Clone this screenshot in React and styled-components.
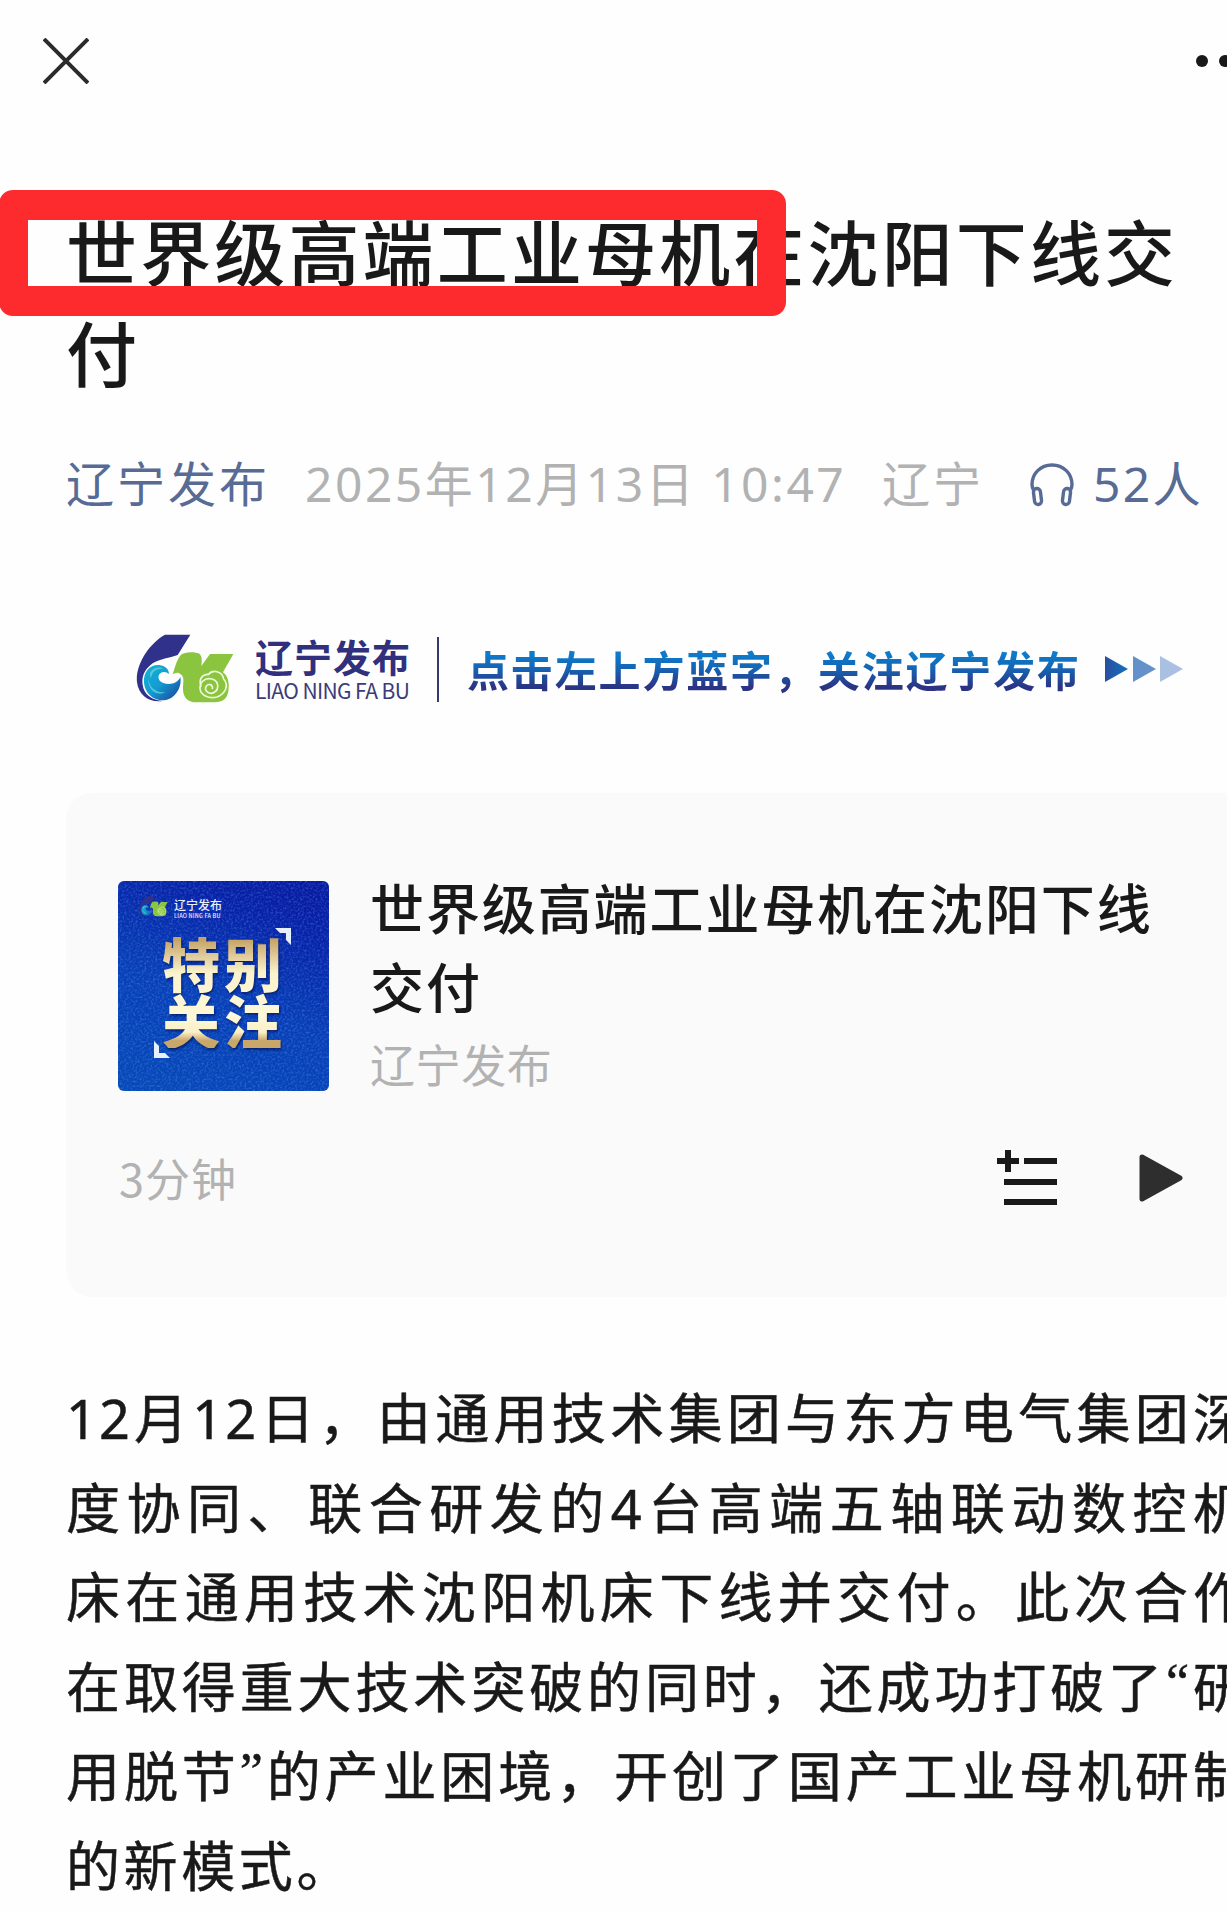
import React from 'react';
import styled, { createGlobalStyle } from 'styled-components';

const GlobalStyle = createGlobalStyle`
  * {
    box-sizing: border-box;
  }
  body {
    margin: 0;
    background: #fefefe;
    color: #191919;
    font-family: 'Noto Sans CJK SC', sans-serif;
    overflow: hidden;
  }
  svg {
    display: block;
    flex: none;
  }
`;

const bodyLines = [
  '12月12日，由通用技术集团与东方电气集团深',
  '度协同、联合研发的4台高端五轴联动数控机',
  '床在通用技术沈阳机床下线并交付。此次合作',
  '在取得重大技术突破的同时，还成功打破了“研',
  '用脱节”的产业困境，开创了国产工业母机研制',
  '的新模式。',
];

// curly quotes get their own narrow glyphs
const withQuotes = (line) =>
  line.split(/([“”])/).map((part, i) => (i % 2 ? <Quote key={i}>{part}</Quote> : part));

const LogoMark = ({ width, id }) => (
  <svg width={width} height={(width * 208) / 294} viewBox="48 43 294 208">
    <defs>
      <linearGradient id={id} x1="0" y1="0" x2="1" y2="1">
        <stop offset="0" stopColor="#12b5d6" />
        <stop offset="0.5" stopColor="#149bd0" />
        <stop offset="1" stopColor="#1b3f98" />
      </linearGradient>
    </defs>
    <path
      d="M135 45H211L173 106C148 116 121 116 98 131C74 148 64 171 68 196C72 225 96 242 129 244C89 250 56 229 51 188C45 134 90 69 135 45Z"
      fill="#30318b"
    />
    <path
      d="M72 190C69 156 90 134 118 136C136 138 147 149 147 163C138 154 124 155 118 164C112 174 117 186 130 190C150 197 173 191 181 172C187 205 163 240 132 242C98 243 75 220 72 190Z"
      fill={`url(#${id})`}
    />
    <path
      d="M84 176C88 205 110 222 136 217C112 231 84 213 84 176ZM92 156C104 140 124 141 131 148C108 145 96 156 93 176C89 168 89 162 92 156Z"
      fill="#55c8de"
    />
    <path
      d="M183 105C192 97 219 95 236 101C245 106 247 120 244 139L270 103H340L309 158C324 169 329 190 325 215C322 237 308 248 284 248H229C204 248 190 234 189 210C189 184 196 168 176 160C169 158 164 161 158 164C165 142 170 120 183 105Z"
      fill="#8bc53f"
    />
    <path
      d="M243 199C235 179 247 163 266 164C278 148 307 155 311 178C328 198 316 222 291 232C267 239 239 226 240 204C241 184 257 174 275 178C296 182 299 208 283 218C268 227 252 213 258 201C263 190 280 194 277 206"
      fill="none"
      stroke="#eefadd"
      strokeWidth="5"
      strokeLinecap="round"
    />
  </svg>
);

const Headphones = () => (
  <svg width="44" height="44" viewBox="0 0 44 44" fill="none" stroke="#576b95" strokeWidth="3.4">
    <path d="M3.500 27C2.500 25 2 24 2 21.500C2 10.500 10.500 2 22 2S42 10.500 42 21.500C42 24 41.500 25 40.500 27" />
    <rect x="4" y="25.500" width="7" height="16" rx="3.500" transform="rotate(-7 7.500 33.500)" />
    <rect x="33" y="25.500" width="7" height="16" rx="3.500" transform="rotate(7 36.500 33.500)" />
  </svg>
);

const App = () => {
  return (
    <Page>
      <GlobalStyle />
      <TopBar>
        <svg width="46" height="46" viewBox="0 0 46 46" stroke="#2b2b2b" strokeWidth="4">
          <path d="M1 1L45 45M45 1L1 45" />
        </svg>
        <Dots>
          <i />
          <i />
          <i />
        </Dots>
      </TopBar>

      <Article>
        <Title>
          世界级高端工业母机在沈阳下线交
          <br />付
          <Marker />
        </Title>

        <Meta>
          <Account>辽宁发布</Account>
          <Published>2025年12月13日 10:47</Published>
          <Region>辽宁</Region>
          <Listeners>
            <Headphones />
            <span>52人</span>
          </Listeners>
        </Meta>

        <Banner>
          <LogoMark width={98} id="bannerWave" />
          <Brand>
            <BrandName>辽宁发布</BrandName>
            <BrandLatin>LIAO NING FA BU</BrandLatin>
          </Brand>
          <Divider />
          <Slogan>点击左上方蓝字，关注辽宁发布</Slogan>
          <svg width="78" height="28" viewBox="0 0 78 28">
            <defs>
              <linearGradient id="arrow" x1="0" x2="1">
                <stop offset="0" stopColor="#2a4f9d" />
                <stop offset="1" stopColor="#1470c0" />
              </linearGradient>
            </defs>
            <path d="M0 1L23 14L0 27Z" fill="url(#arrow)" />
            <path d="M28 1L51 14L28 27Z" fill="#6591cb" />
            <path d="M55 1L78 14L55 27Z" fill="#a9c0e3" />
          </svg>
        </Banner>

        <AudioCard>
          <AudioTop>
            <Cover>
              <Noise width="211" height="210">
                <filter id="grain">
                  <feTurbulence type="fractalNoise" baseFrequency="0.45" numOctaves="2" />
                  <feColorMatrix values="0 0 0 0 0.25  0 0 0 0 0.55  0 0 0 0 1  1.6 0 0 0 -0.68" />
                </filter>
                <rect width="211" height="210" filter="url(#grain)" />
              </Noise>
              <CoverBrand>
                <LogoMark width={29} id="coverWave" />
                <div>
                  <CoverName>辽宁发布</CoverName>
                  <CoverLatin>LIAO NING FA BU</CoverLatin>
                </div>
              </CoverBrand>
              <CoverText>
                特别
                <br />
                关注
              </CoverText>
              <Corner $top={47} $left={157} width="16" height="17" viewBox="0 0 16 17">
                <path d="M0 0H16V17L11 12V5H5Z" fill="#e8effc" />
              </Corner>
              <Corner $top={160} $left={36} width="16" height="17" viewBox="0 0 16 17">
                <path d="M0 0L5 5V12H11L16 17H0Z" fill="#e8effc" />
              </Corner>
            </Cover>
            <div>
              <AudioTitle>
                世界级高端工业母机在沈阳下线
                <br />
                交付
              </AudioTitle>
              <AudioAuthor>辽宁发布</AudioAuthor>
            </div>
          </AudioTop>
          <AudioBottom>
            <Duration>3分钟</Duration>
            <Controls>
              <svg width="60" height="56" viewBox="0 0 60 56" fill="#191919">
                <path d="M8 0H14V8H22V14H14V22H8V14H0V8H8Z" />
                <path d="M27 8H60V14H27ZM7 29H60V35H7ZM7 49H60V55H7Z" />
              </svg>
              <svg width="44" height="48" viewBox="0 0 44 48">
                <path
                  d="M3 3L41 24L3 45Z"
                  fill="#2e2e2e"
                  stroke="#2e2e2e"
                  strokeWidth="5"
                  strokeLinejoin="round"
                />
              </svg>
            </Controls>
          </AudioBottom>
        </AudioCard>

        <Content>
          {bodyLines.map((line, i) => (
            <Line key={line} $last={i === bodyLines.length - 1}>
              {withQuotes(line)}
            </Line>
          ))}
        </Content>
      </Article>
    </Page>
  );
};

const Page = styled.div`
  width: 100%;
  height: 1913px;
  overflow: hidden;
`;

const TopBar = styled.div`
  height: 121px;
  padding: 0 0 0 43px;
  display: flex;
  align-items: center;
  justify-content: space-between;
  overflow: hidden;
`;

const Dots = styled.div`
  display: flex;
  gap: 11px;
  margin-right: -27px;

  i {
    width: 12px;
    height: 12px;
    border-radius: 50%;
    background: #191919;
  }
`;

/* the column runs a little past the right edge of the screen */
const Article = styled.div`
  width: 1183px;
  margin-left: 66px;
  padding-top: 78px;
`;

const Title = styled.h1`
  position: relative;
  margin: 0;
  font-size: 71px;
  font-weight: 500;
  line-height: 101px;
  letter-spacing: 3.15px;
  white-space: nowrap;
`;

/* red frame drawn over the headline */
const Marker = styled.span`
  position: absolute;
  left: -67px;
  top: -9px;
  width: 787px;
  height: 126px;
  border: solid #fe2b2e;
  border-width: 30px 29px;
  border-radius: 14px;
`;

const Meta = styled.div`
  display: flex;
  align-items: center;
  height: 70px;
  margin-top: 45px;
  font-family: 'Noto Sans', 'Noto Sans CJK SC', sans-serif;
  font-size: 48px;
  letter-spacing: 3px;
  white-space: nowrap;
  color: #b2b2b2;
`;

const Account = styled.span`
  width: 239px;
  color: #576b95;
`;

const Published = styled.span`
  width: 577px;
  letter-spacing: 2.5px;
`;

const Region = styled.span`
  width: 148px;
`;

const Listeners = styled.span`
  display: flex;
  align-items: center;
  gap: 19px;
  color: #576b95;
  letter-spacing: 2.3px;

  svg {
    margin-top: 8px;
  }
`;

const Banner = styled.div`
  display: flex;
  align-items: center;
  height: 70px;
  margin: 118px 0 0 70px;
  white-space: nowrap;
`;

const Brand = styled.div`
  width: 182px;
  margin-left: 21px;
  color: #30307c;
`;

const BrandName = styled.div`
  font-size: 38px;
  font-weight: 700;
  line-height: 42px;
  letter-spacing: 1px;
`;

const BrandLatin = styled.div`
  font-size: 21px;
  line-height: 26px;
  letter-spacing: -0.6px;
  color: #3b3b78;
`;

const Divider = styled.div`
  width: 2px;
  height: 65px;
  background: #35396f;
`;

const Slogan = styled.div`
  width: 638px;
  margin-left: 28px;
  font-size: 42px;
  font-weight: 700;
  line-height: 60px;
  letter-spacing: 1.85px;
  color: transparent;
  background: linear-gradient(#0d7ccb 25%, #1663b3 50%, #2b3484 80%);
  background-clip: text;
`;

const AudioCard = styled.div`
  height: 504px;
  margin-top: 89px;
  padding: 74px 0 0 52px;
  border-radius: 26px;
  background: #fafafa;
`;

const AudioTop = styled.div`
  display: flex;
  gap: 41px;
  height: 250px;
  white-space: nowrap;
`;

const Cover = styled.div`
  position: relative;
  width: 211px;
  height: 210px;
  margin-top: 14px;
  flex: none;
  border-radius: 6px;
  overflow: hidden;
  background: linear-gradient(20deg, #0649b8 0%, #083fb8 45%, #0722a8 80%, #0719a0 100%);
`;

const Noise = styled.svg`
  position: absolute;
  inset: 0;
  opacity: 0.4;
`;

const CoverBrand = styled.div`
  position: relative;
  display: flex;
  align-items: flex-start;
  gap: 6px;
  height: 46px;
  padding: 15px 0 0 21px;
  color: #e9f0ff;
`;

const CoverName = styled.div`
  margin-top: 1px;
  font-size: 12px;
  font-weight: 500;
  line-height: 16px;
`;

const CoverLatin = styled.div`
  font-size: 5.5px;
  font-weight: 500;
  line-height: 6px;
  letter-spacing: 0.2px;
`;

const CoverText = styled.div`
  position: relative;
  padding: 7px 0 0 44px;
  font-size: 58px;
  font-weight: 900;
  line-height: 57px;
  letter-spacing: 4px;
  color: transparent;
  background: linear-gradient(#c5a265 10%, #fbf3cc 38%, #fdf8d8 75%, #fbefc5 87%, #c9a669 94%);
  background-clip: text;
  filter: drop-shadow(1px 2px 1px rgba(0, 10, 70, 0.6));
`;

const Corner = styled.svg`
  position: absolute;
  top: ${({ $top }) => $top}px;
  left: ${({ $left }) => $left}px;
`;

const AudioTitle = styled.div`
  font-size: 54px;
  font-weight: 500;
  line-height: 79px;
  letter-spacing: 1.9px;
`;

const AudioAuthor = styled.div`
  font-size: 45px;
  line-height: 77px;
  letter-spacing: 0.6px;
  color: #b2b2b2;
`;

const AudioBottom = styled.div`
  display: flex;
  align-items: center;
  justify-content: space-between;
  height: 121px;
  padding-right: 66px;
`;

const Duration = styled.span`
  padding-left: 1px;
  font-size: 45px;
  letter-spacing: 1px;
  color: #b2b2b2;
`;

const Controls = styled.div`
  display: flex;
  align-items: center;
  gap: 82px;
`;

const Content = styled.div`
  margin-top: 77px;
  font-family: 'Noto Sans', 'Noto Sans CJK SC', sans-serif;
  -webkit-text-stroke: 0.5px #191919;
`;

const Line = styled.p`
  margin: 0;
  font-size: 54px;
  line-height: 89.5px;
  letter-spacing: ${({ $last }) => ($last ? '3.6px' : '2px')};
  text-align: justify;
  text-align-last: ${({ $last }) => ($last ? 'left' : 'justify')};
  white-space: nowrap;
`;

const Quote = styled.span`
  font-family: 'Liberation Serif', serif;
  font-size: 52px;
  line-height: 0;
  vertical-align: 8px;
`;

export default App;
